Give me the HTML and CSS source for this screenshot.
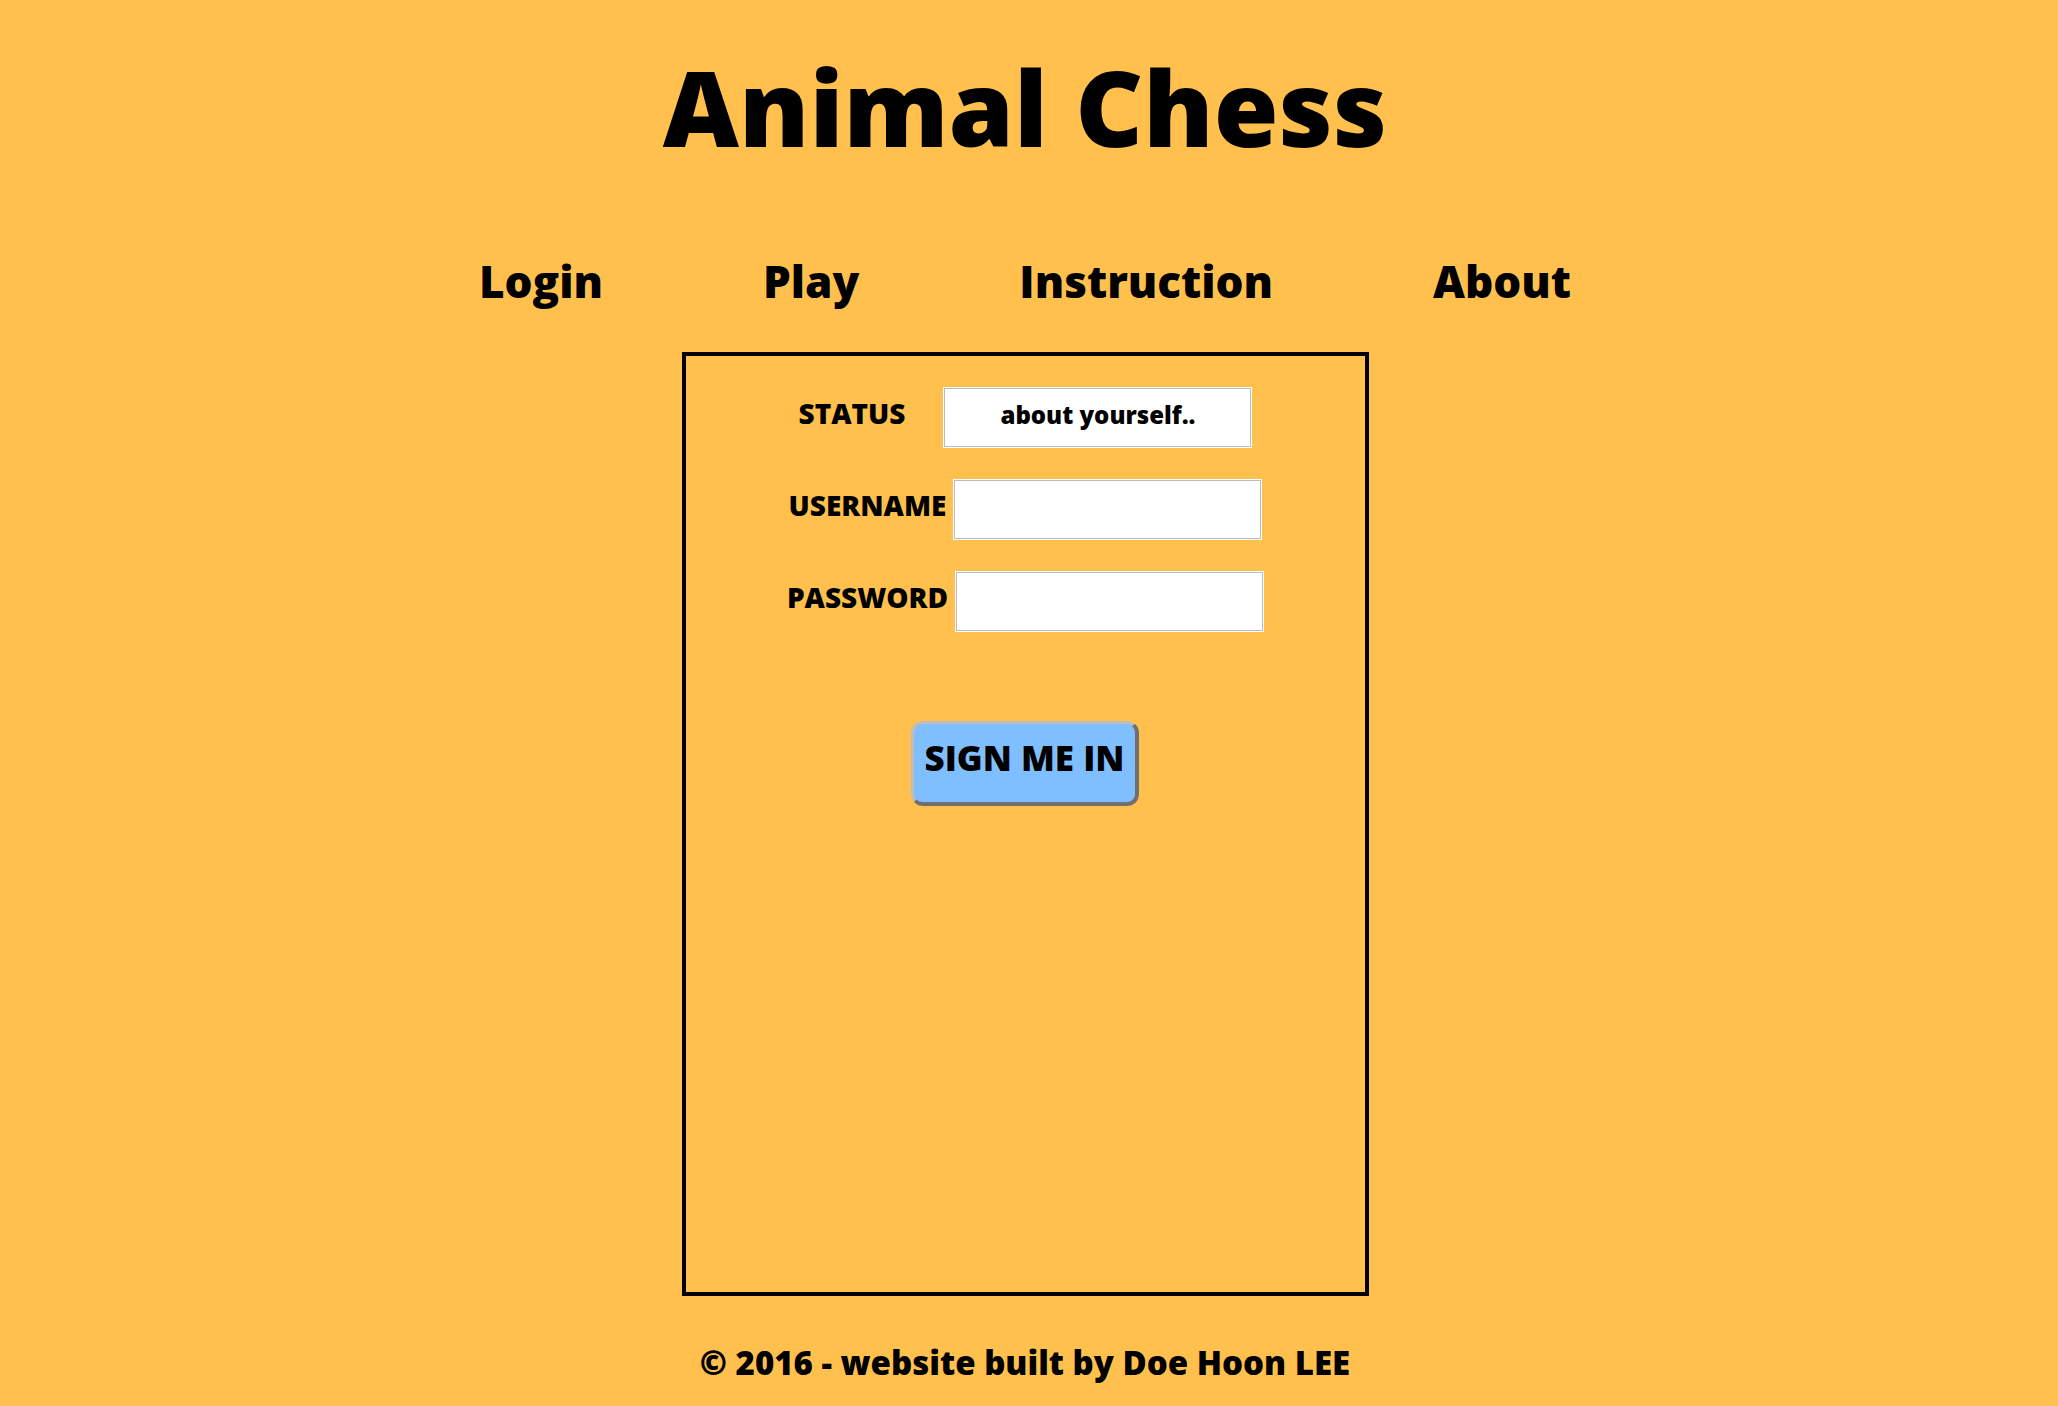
FILE: index.html
```html
<!DOCTYPE html>
<html lang="en">
<head>
<meta charset="utf-8">
<title>Animal Chess</title>
<link rel="stylesheet" href="styles.css">
</head>
<body>
<header class="header">
  <h1 class="title">Animal Chess</h1>
  <nav class="nav">
    <a class="nav-link" href="#">Login</a>
    <a class="nav-link" href="#">Play</a>
    <a class="nav-link" href="#">Instruction</a>
    <a class="nav-link" href="#">About</a>
  </nav>
</header>
<main class="panel">
  <form class="login-form">
    <div class="row">
      <label class="label label-status" for="status">STATUS</label>
      <input class="field field-status" id="status" type="text" placeholder="about yourself..">
    </div>
    <div class="row">
      <label class="label" for="username">USERNAME</label>
      <input class="field" id="username" type="text">
    </div>
    <div class="row">
      <label class="label" for="password">PASSWORD</label>
      <input class="field" id="password" type="password">
    </div>
    <div class="actions">
      <button class="btn" type="button">SIGN ME IN</button>
    </div>
  </form>
</main>
<footer class="footer">© 2016 - website built by Doe Hoon LEE</footer>
</body>
</html>
```

FILE: styles.css
```css
html, body {
  margin: 0;
  padding: 0;
}

body {
  background: #ffc04d;
  color: #000;
  font-family: "Open Sans", "DejaVu Sans", sans-serif;
  font-weight: 800;
  padding-right: 8px;
  min-height: 1406px;
  box-sizing: border-box;
}

.header {
  text-align: center;
}

.title {
  margin: 0;
  padding-top: 54px;
  font-size: 105px;
  line-height: 105px;
  font-weight: 800;
  letter-spacing: 0;
}

.nav {
  margin-top: 101px;
  display: flex;
  justify-content: center;
  gap: 160px;
  font-size: 44px;
  line-height: 42px;
}

.nav-link {
  color: #000;
  text-decoration: none;
}

.panel {
  box-sizing: border-box;
  width: 687px;
  height: 944px;
  margin: 50px auto 0;
  border: 4px solid #000;
  padding-top: 32px;
}

.login-form {
  display: flex;
  flex-direction: column;
  align-items: center;
}

.row {
  display: flex;
  justify-content: center;
  align-items: baseline;
  gap: 8px;
  margin-bottom: 33px;
}

.label {
  font-size: 28px;
}

.label-status {
  margin-right: 31px;
}

.field {
  box-sizing: border-box;
  width: 307px;
  height: 59px;
  border: 1px solid #bcbcbc;
  box-shadow: 0 0 0 1px #fff;
  margin: 0;
  background: #fff;
  padding: 0 0 6px;
  font-family: "Open Sans", "DejaVu Sans", sans-serif;
  font-weight: 800;
  font-size: 24px;
  text-align: center;
  color: #000;
  outline: none;
}

.field::placeholder {
  color: #000;
  opacity: 1;
}

.actions {
  margin-top: 57px;
}

.btn {
  box-sizing: border-box;
  width: 228px;
  height: 85px;
  background: #80bfff;
  border: 4px solid;
  border-color: #bdbdbd #707070 #707070 #bdbdbd;
  border-left-width: 3px;
  border-top-width: 3px;
  border-radius: 12px;
  font-family: "Open Sans", "DejaVu Sans", sans-serif;
  font-weight: 800;
  font-size: 35px;
  color: #000;
  padding: 0 0 12px;
  cursor: pointer;
}

.footer {
  margin-top: 44px;
  text-align: center;
  font-size: 33px;
}
```
